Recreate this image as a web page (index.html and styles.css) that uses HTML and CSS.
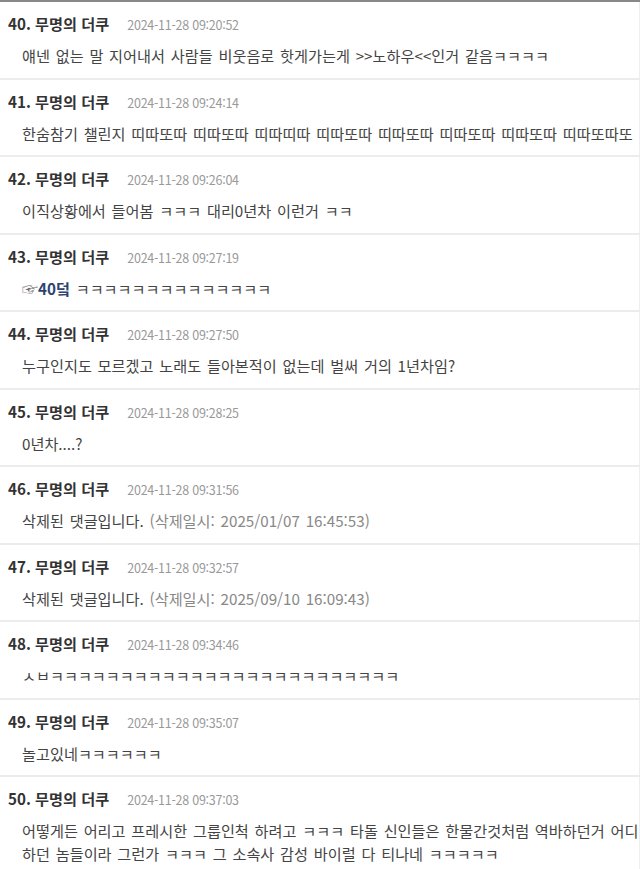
FILE: index.html
```html
<!DOCTYPE html>
<html lang="ko">
<head>
<meta charset="utf-8">
<title>댓글</title>
<link rel="stylesheet" href="styles.css">
</head>
<body>
<ul class="comments">
  <li class="comment">
    <div class="head"><span class="name">40. 무명의 더쿠</span><span class="date">2024-11-28 09:20:52</span></div>
    <div class="text">얘넨 없는 말 지어내서 사람들 비웃음로 핫게가는게 &gt;&gt;노하우&lt;&lt;인거 같음ㅋㅋㅋㅋ</div>
  </li>
  <li class="comment">
    <div class="head"><span class="name">41. 무명의 더쿠</span><span class="date">2024-11-28 09:24:14</span></div>
    <div class="text">한숨참기 챌린지 띠따또따 띠따또따 띠따띠따 띠따또따 띠따또따 띠따또따 띠따또따 띠따또따또</div>
  </li>
  <li class="comment">
    <div class="head"><span class="name">42. 무명의 더쿠</span><span class="date">2024-11-28 09:26:04</span></div>
    <div class="text">이직상황에서 들어봄 ㅋㅋㅋ 대리0년차 이런거 ㅋㅋ</div>
  </li>
  <li class="comment">
    <div class="head"><span class="name">43. 무명의 더쿠</span><span class="date">2024-11-28 09:27:19</span></div>
    <div class="text"><span class="hand">☞</span><a class="ref">40덬</a> ㅋㅋㅋㅋㅋㅋㅋㅋㅋㅋㅋㅋㅋㅋ</div>
  </li>
  <li class="comment">
    <div class="head"><span class="name">44. 무명의 더쿠</span><span class="date">2024-11-28 09:27:50</span></div>
    <div class="text">누구인지도 모르겠고 노래도 들아본적이 없는데 벌써 거의 1년차임?</div>
  </li>
  <li class="comment">
    <div class="head"><span class="name">45. 무명의 더쿠</span><span class="date">2024-11-28 09:28:25</span></div>
    <div class="text">0년차....?</div>
  </li>
  <li class="comment">
    <div class="head"><span class="name">46. 무명의 더쿠</span><span class="date">2024-11-28 09:31:56</span></div>
    <div class="text">삭제된 댓글입니다. <span class="deleted">(삭제일시: 2025/01/07 16:45:53)</span></div>
  </li>
  <li class="comment">
    <div class="head"><span class="name">47. 무명의 더쿠</span><span class="date">2024-11-28 09:32:57</span></div>
    <div class="text">삭제된 댓글입니다. <span class="deleted">(삭제일시: 2025/09/10 16:09:43)</span></div>
  </li>
  <li class="comment">
    <div class="head"><span class="name">48. 무명의 더쿠</span><span class="date">2024-11-28 09:34:46</span></div>
    <div class="text">ㅅㅂㅋㅋㅋㅋㅋㅋㅋㅋㅋㅋㅋㅋㅋㅋㅋㅋㅋㅋㅋㅋㅋㅋㅋㅋㅋ</div>
  </li>
  <li class="comment">
    <div class="head"><span class="name">49. 무명의 더쿠</span><span class="date">2024-11-28 09:35:07</span></div>
    <div class="text">놀고있네ㅋㅋㅋㅋㅋㅋ</div>
  </li>
  <li class="comment">
    <div class="head"><span class="name">50. 무명의 더쿠</span><span class="date">2024-11-28 09:37:03</span></div>
    <div class="text">어떻게든 어리고 프레시한 그룹인척 하려고 ㅋㅋㅋ 타돌 신인들은 한물간것처럼 역바하던거 어디하던 놈들이라 그런가 ㅋㅋㅋ 그 소속사 감성 바이럴 다 티나네 ㅋㅋㅋㅋㅋ</div>
  </li>
</ul>
</body>
</html>
```

FILE: styles.css
```css
html, body {
  margin: 0;
  padding: 0;
  background: #fff;
}
body {
  font-family: "Noto Sans CJK KR", "Noto Sans", sans-serif;
  color: #333;
  border-top: 2px solid #888;
  box-shadow: inset -1px 0 #eee;
  min-height: 867px;
}
.comments {
  list-style: none;
  margin: 0;
  padding: 0;
}
.comment {
  padding: 11px 0 10.5px 8px;
  border-bottom: 2px solid #ececec;
}
.head {
  display: flex;
  align-items: baseline;
  gap: 18px;
  height: 20px;
  line-height: 20px;
}
.name {
  font-size: 15.2px;
  font-weight: 700;
  color: #333;
}
.date {
  font-size: 12.5px;
  letter-spacing: -0.25px;
  color: #999;
}
.text {
  margin-top: 11px;
  padding-left: 14px;
  font-size: 15.2px;
  line-height: 23px;
  color: #444;
  word-spacing: 1.5px;
}
.hand {
  color: #666;
  font-size: 16px;
}
.ref {
  color: #2b4470;
  font-weight: 700;
}
.deleted {
  color: #888;
}
```
